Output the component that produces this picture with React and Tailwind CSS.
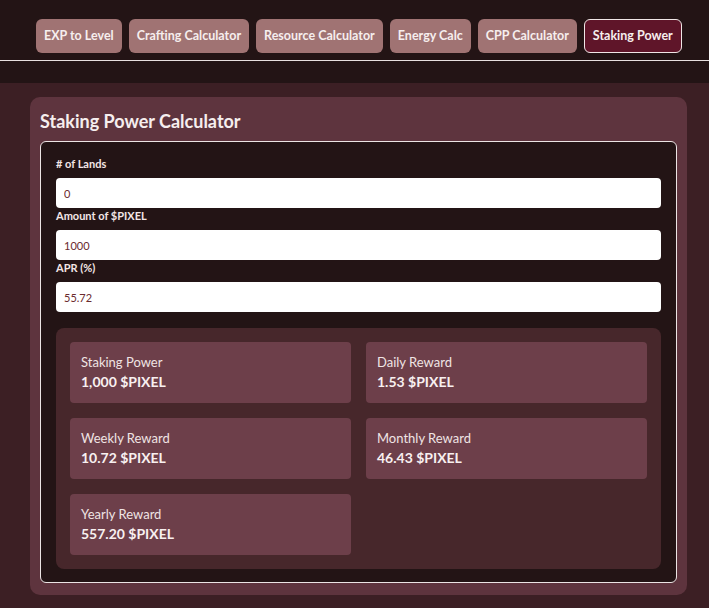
import React from 'react';

const tabs = [
  { name: "EXP to Level" },
  { name: "Crafting Calculator" },
  { name: "Resource Calculator" },
  { name: "Energy Calc" },
  { name: "CPP Calculator" },
  { name: "Staking Power", active: true }
];

const fields = [
  { label: "# of Lands", value: "0" },
  { label: "Amount of $PIXEL", value: "1000" },
  { label: "APR (%)", value: "55.72" }
];

const results = [
  { label: "Staking Power", value: "1,000 $PIXEL" },
  { label: "Daily Reward", value: "1.53 $PIXEL" },
  { label: "Weekly Reward", value: "10.72 $PIXEL" },
  { label: "Monthly Reward", value: "46.43 $PIXEL" },
  { label: "Yearly Reward", value: "557.20 $PIXEL" }
];

const App = () => {
  return (
    <div className="min-h-[608px] bg-[#3c1f24] font-['Lato','Liberation_Sans',sans-serif] text-[#f3e6e6]">
      <header className="bg-[#231415] pb-[22px]">
        <nav className="flex gap-[7px] pl-9 pt-[19px] pb-[7px] border-b border-[#e8e0e0]">
          {tabs.map((tab) => (
            <button
              key={tab.name}
              className={
                tab.active
                  ? "h-[34px] px-2 rounded-md text-[12.5px] font-bold bg-[#5f1529] border border-[#f0e6e6] text-[#f6eeee]"
                  : "h-[34px] px-2 rounded-md text-[12.5px] font-bold bg-[#a07373] text-[#f6eeee]"
              }
            >
              {tab.name}
            </button>
          ))}
        </nav>
      </header>

      <main className="pt-[14px] pb-3 pl-[30px]">
        <section className="w-[657px] bg-[#5e343e] rounded-[10px] px-[10px] pt-3 pb-3">
          <h2 className="text-[18px] leading-6 font-bold mb-2 text-[#f6eeee]">Staking Power Calculator</h2>

          <div className="bg-[#231415] border border-[#ece4e4] rounded-md px-[15px] pt-[14px] pb-[13px]">
            {fields.map((f) => (
              <div key={f.label}>
                <label className="block text-[11px] leading-4 font-bold mb-[6px] text-[#f3e6e6]">{f.label}</label>
                <input
                  readOnly
                  value={f.value}
                  className="block w-full h-[30px] rounded bg-white px-2 text-[11px] text-[#6b2b2e] outline-none"
                />
              </div>
            ))}

            <div className="mt-4 bg-[#47272b] rounded-lg p-[14px] grid grid-cols-2 gap-x-[15px] gap-y-[15px]">
              {results.map((r) => (
                <div key={r.label} className="h-[61px] bg-[#6d3f4a] rounded px-[11px] pt-[11px]">
                  <div className="text-[13px] leading-[18px] text-[#f0e4e4]">{r.label}</div>
                  <div className="text-[14px] leading-[21px] font-bold text-[#f8f0f0]">{r.value}</div>
                </div>
              ))}
            </div>
          </div>
        </section>
      </main>
    </div>
  );
};

export default App;
